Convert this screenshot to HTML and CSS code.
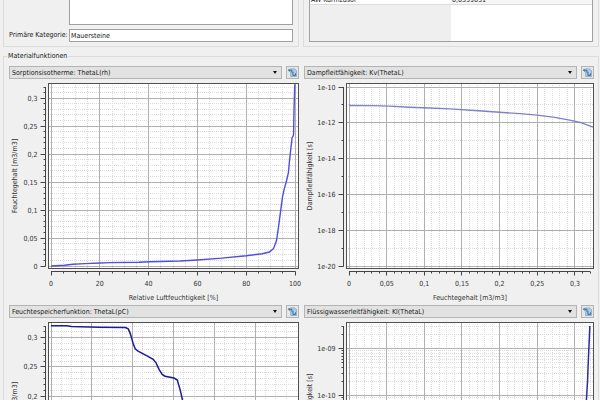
FILE: index.html
```
<!DOCTYPE html>
<html lang="de">
<head>
    <meta charset="UTF-8">
    <meta name="viewport" content="width=device-width, initial-scale=1.0">
    <title>Materialeditor</title>
    <link rel="stylesheet" href="styles.css">
</head>
<body>

    <!-- Shared icon for the copy buttons -->
    <svg class="defs" width="0" height="0">
        <symbol id="icon-copy" viewBox="0 0 10 10">
            <path d="M3 1h4.5l2 2v6.5H3z" fill="#a9cdea" stroke="#7f9fbd" stroke-width=".8"/>
            <path d="M5.5 4.2v4h2.8V6" fill="none" stroke="#2e5f92" stroke-width="1"/>
            <path d="M.3 2.5h4v2.6M2 1L.5 2.5 2 4" fill="none" stroke="#2c6fae" stroke-width="1.1"/>
        </symbol>
    </svg>

    <div class="top">
        <div class="group">
            <textarea class="field description" aria-label="Beschreibung"></textarea>
            <div class="form-row">
                <label for="category">Primäre Kategorie:</label>
                <input class="field" type="text" id="category" value="Mauersteine">
            </div>
        </div>
        <div class="group">
            <table class="values">
                <tr><td>AW Kurmzusor</td><td class="value">0,0539031</td></tr>
                <tr class="filler"><td></td><td></td></tr>
            </table>
        </div>
    </div>

    <fieldset class="functions">
        <legend>Materialfunktionen</legend>
        <div class="charts">
            <section>
                <div class="bar">
                    <div class="combo">
                        <select aria-label="Funktion 1"><option>Sorptionsisotherme: ThetaL(rh)</option></select>
                    </div>
                    <button type="button" aria-label="Kopieren"><svg><use href="#icon-copy"/></svg></button>
                </div>
                <svg class="chart" id="sorption"></svg>
            </section>
            <section>
                <div class="bar">
                    <div class="combo">
                        <select aria-label="Funktion 2"><option>Dampfleitfähigkeit: Kv(ThetaL)</option></select>
                    </div>
                    <button type="button" aria-label="Kopieren"><svg><use href="#icon-copy"/></svg></button>
                </div>
                <svg class="chart" id="vapour"></svg>
            </section>
            <section>
                <div class="bar">
                    <div class="combo">
                        <select aria-label="Funktion 3"><option>Feuchtespeicherfunktion: ThetaL(pC)</option></select>
                    </div>
                    <button type="button" aria-label="Kopieren"><svg><use href="#icon-copy"/></svg></button>
                </div>
                <svg class="chart tall" id="retention"></svg>
            </section>
            <section>
                <div class="bar">
                    <div class="combo">
                        <select aria-label="Funktion 4"><option>Flüssigwasserleitfähigkeit: Kl(ThetaL)</option></select>
                    </div>
                    <button type="button" aria-label="Kopieren"><svg><use href="#icon-copy"/></svg></button>
                </div>
                <svg class="chart tall" id="liquid"></svg>
            </section>
        </div>
    </fieldset>

    <script src="charts.js"></script>
</body>
</html>
```
FILE: styles.css
```
* {
    box-sizing: border-box;
}

html, body {
    height: 100%;
    overflow: hidden;
}

body {
    margin: 0;
    background: #f0f0f0;
    color: #1a1a1a;
    font-family: "DejaVu Sans Condensed", "DejaVu Sans", sans-serif;
    font-size: 7px;
    line-height: 9px;
}

input, select, textarea, button {
    font: inherit;
    color: inherit;
    margin: 0;
}

.defs {
    position: absolute;
}

/* Upper boxes, scrolled so only their lower part shows */
.top {
    display: flex;
    align-items: flex-end;
    gap: 4px;
    height: 47px;
    padding: 0 1px 0 3px;
    overflow: hidden;
}

.group {
    flex: 1;
    padding: 5px 5px 4px;
    border: 1px solid #dcdcdc;
}

.field {
    border: 1px solid #a0a0a0;
    background: white;
    border-radius: 0;
    outline: none;
}

.description {
    display: block;
    width: calc(100% - 60px);
    height: 60px;
    margin: 0 0 4px 60px;
    resize: none;
}

.form-row {
    display: flex;
    align-items: center;
}

.form-row label {
    width: 60px;
    white-space: nowrap;
}

.form-row .field {
    flex: 1;
    min-width: 0;
    height: 13px;
    padding: 0 1px;
}

.values {
    width: 100%;
    table-layout: fixed;
    border: 1px solid #a0a0a0;
    border-spacing: 0;
}

.values td {
    height: 12px;
    padding: 0 1px;
    background: white;
    border-bottom: 1px solid #dcdcdc;
    line-height: 7px;
    vertical-align: bottom;
}

.values .value {
    background: #f5f5f5;
}

.values .filler td {
    height: 36px;
    border: none;
}

.values .filler td:first-child {
    background: #efefef;
}

/* Function charts */
.functions {
    min-width: 0;
    margin: 5px 1px 0 3px;
    padding: 5px 4px 0 5px;
    border: 1px solid #dcdcdc;
}

.functions legend {
    margin-left: -2px;
    padding: 0 1px;
}

.charts {
    display: grid;
    grid-template-columns: 1fr 1fr;
    column-gap: 5px;
}

.bar {
    display: flex;
    gap: 4px;
}

.combo {
    position: relative;
    flex: 1;
}

.combo::after {
    content: "";
    position: absolute;
    top: 5px;
    right: 5px;
    border: 2px solid transparent;
    border-top: 3px solid #111;
    border-bottom: none;
    pointer-events: none;
}

select {
    appearance: none;
    display: block;
    width: 100%;
    height: 13px;
    padding: 1px 2px 0;
    border: 1px solid #b4b4b4;
    border-radius: 0;
    background: #e2e2e2;
}

button {
    width: 13px;
    height: 13px;
    padding: 1px;
    border: 1px solid #b4b4b4;
    background: #e6e6e6;
}

button svg {
    display: block;
    width: 9px;
    height: 9px;
}

.chart {
    display: block;
    width: 100%;
    height: 226px;
    overflow: visible;
}

.chart.tall {
    height: 234px;
}

.chart text {
    fill: #333;
    font-size: 7px;
}

.canvas {
    fill: white;
}

.frame {
    fill: none;
    stroke: #505050;
}

.major {
    stroke: #b0b0b0;
}

.minor {
    stroke: #dcdcdc;
    stroke-dasharray: 1 1;
}

.axis {
    stroke: #444;
}

.curve {
    fill: none;
}
```
FILE: charts.js
```
const NS = "http://www.w3.org/2000/svg";

function range(from, to, step) {
    const values = [];
    const count = Math.floor((to - from) / step + 0.001);
    for (let i = 0; i <= count; i++) values.push(from + i * step);
    return values;
}

function comma(v) {
    return String(Math.round(v * 100) / 100).replace(".", ",");
}

function power(v) {
    return "1e-" + String(-v).padStart(2, "0");
}

// 2..9 steps inside every decade
function logMinors(from, to) {
    const values = [];
    for (let d = Math.floor(from); d <= to; d++) {
        for (let n = 2; n < 10; n++) {
            const v = d + Math.log10(n);
            if (v >= from && v <= to) values.push(v);
        }
    }
    return values;
}

const moistureAxis = {
    min: 0, max: 0.32, label: comma, title: "Feuchtegehalt [m3/m3]",
    major: range(0, 0.3, 0.05), minor: range(0, 0.32, 0.01)
};

const charts = {
    sorption: {
        left: 39, color: "#5050dc", width: 1.4,
        x: { min: 0, max: 100, label: comma, title: "Relative Luftfeuchtigkeit [%]",
             major: range(0, 100, 20), minor: range(0, 100, 5) },
        y: moistureAxis,
        data: [[0, 0], [5.5, .0014], [9, .003], [14, .0043], [20, .0054], [24, .006], [36, .0068],
               [40.5, .0077], [53, .009], [60, .0107], [70, .014], [80, .0184], [86.6, .022],
               [89.5, .025], [91.2, .031], [92.4, .045], [93.2, .068], [94, .095], [94.9, .124],
               [95.5, .136], [96.5, .152], [97.3, .167], [97.7, .186], [98.2, .206],
               [98.8, .229], [99.4, .234], [99.6, .28], [99.9, .325]]
    },
    vapour: {
        left: 42, color: "#8080c4", width: 1.4,
        x: moistureAxis,
        y: { min: -20, max: -10, label: power, title: "Dampfleitfähigkeit [s]",
             major: range(-20, -10, 2), minor: range(-20, -10, 1) },
        data: [[0, -11.03], [.03, -11.04], [.054, -11.07], [.08, -11.13], [.107, -11.17],
               [.134, -11.22], [.167, -11.31], [.2, -11.41], [.227, -11.49], [.25, -11.57],
               [.273, -11.7], [.293, -11.85], [.307, -11.98], [.324, -12.24]]
    },
    retention: {
        left: 39, color: "#1c1c96", width: 1.5,
        x: { min: 0, max: 5.97, label: comma, title: "Kapillardruck pC",
             major: range(0, 5, 1), minor: range(0, 5.97, 0.25) },
        y: moistureAxis,
        data: [[0, .3205], [.38, .3205], [.5, .319], [1.18, .318], [1.82, .3174], [1.89, .315],
               [1.94, .307], [2.01, .29], [2.06, .281], [2.13, .277], [2.35, .269], [2.5, .263],
               [2.57, .257], [2.65, .245], [2.72, .237], [2.79, .234], [3.01, .231],
               [3.09, .2275], [3.13, .218], [3.17, .208], [3.22, .1925], [3.38, .124]]
    },
    liquid: {
        left: 42, color: "#2c2ca0", width: 1.5,
        x: moistureAxis,
        y: { min: -12.5, max: -8.515, label: power, title: "Flüssigwasserleitfähigkeit [s]",
             major: range(-12, -9, 1), minor: logMinors(-12.5, -8.515) },
        data: [[.3198, -8.515], [.319, -8.81], [.3178, -9.24], [.3168, -9.67], [.3152, -10.1],
               [.3125, -11]]
    }
};

function add(svg, name, attrs, text) {
    const el = document.createElementNS(NS, name);
    for (const key in attrs) el.setAttribute(key, attrs[key]);
    if (text !== undefined) el.textContent = text;
    svg.appendChild(el);
}

function line(svg, cls, x1, y1, x2, y2) {
    add(svg, "line", { class: cls, x1, y1, x2, y2 });
}

function draw(id) {
    const svg = document.getElementById(id);
    const chart = charts[id];
    const w = svg.clientWidth;
    const left = chart.left;
    const top = 4;
    const bottom = svg.clientHeight - 36;
    const { x, y } = chart;
    const px = v => left + 3 + (v - x.min) / (x.max - x.min) * (w - left - 7);
    const py = v => bottom - 3 - (v - y.min) / (y.max - y.min) * (bottom - top - 7);
    const snap = v => Math.floor(v) + 0.5;

    svg.replaceChildren();
    add(svg, "rect", { class: "canvas", x: left, y: top, width: w - left, height: bottom - top });

    // Grid
    x.minor.forEach(v => line(svg, "minor", snap(px(v)), top, snap(px(v)), bottom));
    y.minor.forEach(v => line(svg, "minor", left, snap(py(v)), w, snap(py(v))));
    x.major.forEach(v => line(svg, "major", snap(px(v)), top, snap(px(v)), bottom));
    y.major.forEach(v => line(svg, "major", left, snap(py(v)), w, snap(py(v))));

    const points = chart.data.map(([a, b]) => px(a) + "," + py(b)).join(" ");
    add(svg, "polyline", { class: "curve", points, stroke: chart.color, "stroke-width": chart.width });
    add(svg, "rect", { class: "frame", x: left + 0.5, y: top + 0.5, width: w - left - 1, height: bottom - top - 1 });

    // Axes
    const ax = left - 2.5;
    const ay = bottom + 2.5;
    line(svg, "axis", ax, py(y.max), ax, py(y.min));
    line(svg, "axis", px(x.min), ay, px(x.max), ay);
    y.minor.forEach(v => line(svg, "axis", ax - 2, snap(py(v)), ax, snap(py(v))));
    x.minor.forEach(v => line(svg, "axis", snap(px(v)), ay, snap(px(v)), ay + 2));
    y.major.forEach(v => {
        line(svg, "axis", ax - 5, snap(py(v)), ax, snap(py(v)));
        add(svg, "text", { x: ax - 8, y: snap(py(v)) + 2, "text-anchor": "end" }, y.label(v));
    });
    x.major.forEach(v => {
        line(svg, "axis", snap(px(v)), ay, snap(px(v)), ay + 4);
        add(svg, "text", { x: px(v), y: ay + 14, "text-anchor": "middle" }, x.label(v));
    });

    // Titles
    const mid = (top + bottom) / 2;
    add(svg, "text", { x: (left + w) / 2, y: ay + 28, "text-anchor": "middle" }, x.title);
    add(svg, "text", { "text-anchor": "middle", transform: `translate(8 ${mid}) rotate(-90)` }, y.title);
}

function drawAll() {
    Object.keys(charts).forEach(draw);
}

window.addEventListener("resize", drawAll);
drawAll();
```
